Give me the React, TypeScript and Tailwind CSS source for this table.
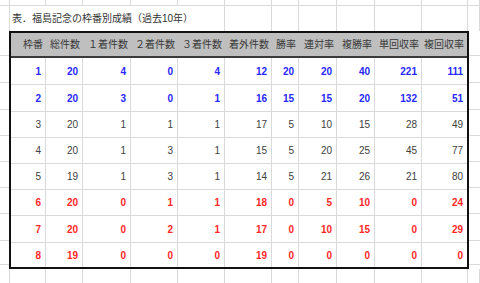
import React from "react";

const OUTER = [10, 36, 37, 48, 47, 47, 47, 27, 38, 38, 47, 46, 12];
const INNER = [35, 37, 48, 47, 47, 47, 27, 38, 38, 47, 45];
const HEAD = ["枠番", "総件数", "１着件数", "２着件数", "３着件数", "着外件数", "勝率", "連対率", "複勝率", "単回収率", "複回収率"];
const ROWS: { v: number[]; c: "b" | "n" | "r" }[] = [
  { v: [1, 20, 4, 0, 4, 12, 20, 20, 40, 221, 111], c: "b" },
  { v: [2, 20, 3, 0, 1, 16, 15, 15, 20, 132, 51], c: "b" },
  { v: [3, 20, 1, 1, 1, 17, 5, 10, 15, 28, 49], c: "n" },
  { v: [4, 20, 1, 3, 1, 15, 5, 20, 25, 45, 77], c: "n" },
  { v: [5, 19, 1, 3, 1, 14, 5, 21, 26, 21, 80], c: "n" },
  { v: [6, 20, 0, 1, 1, 18, 0, 5, 10, 0, 24], c: "r" },
  { v: [7, 20, 0, 2, 1, 17, 0, 10, 15, 0, 29], c: "r" },
  { v: [8, 19, 0, 0, 0, 19, 0, 0, 0, 0, 0], c: "r" },
];
const RH = [27, 27, 26, 26, 26, 26, 27, 24];
const SIDE_H = [25, 27, 27, 26, 26, 26, 26, 27, 24];

const font = { fontFamily: '"Liberation Sans", "Noto Sans CJK JP", sans-serif' };

export default function App() {
  return (
    <div className="w-[480px] h-[283px] bg-white overflow-hidden flex flex-col text-[#404040]" style={font}>
      {/* top strip */}
      <div className="flex h-[6px] border-b border-[#dadada] shrink-0">
        {OUTER.map((w, i) => (
          <div key={i} className="h-full border-r border-[#dadada]" style={{ width: w }} />
        ))}
      </div>
      {/* title row */}
      <div className="flex h-[25px] shrink-0">
        <div className="h-full w-[10px] border-r border-[#dadada]" />
        <div className="h-full w-[215px] border-r border-[#dadada] flex items-center pl-[2px] text-[10px] text-[#333] whitespace-nowrap">
          表．福島記念の枠番別成績（過去10年）
        </div>
        {OUTER.slice(6).map((w, i) => (
          <div key={i} className="h-full border-r border-[#dadada]" style={{ width: w }} />
        ))}
      </div>
      {/* table section */}
      <div className="flex shrink-0">
        <div className="w-[9px] flex flex-col">
          {SIDE_H.map((h, i) => (
            <div key={i} className="border-b border-[#dadada]" style={{ height: h }} />
          ))}
        </div>
        <div className="w-[460px] border-2 border-[#111] flex flex-col">
          <div className="flex h-[25px] bg-[#bfbfbf] border-b-2 border-[#3a3a3a]">
            {HEAD.map((t, i) => (
              <div
                key={i}
                className="h-full flex items-center justify-end pr-[3px] text-[10px] text-[#383838] whitespace-nowrap"
                style={{ width: INNER[i] }}
              >
                {t}
              </div>
            ))}
          </div>
          {ROWS.map((r, ri) => (
            <div
              key={ri}
              className={`flex ${ri < 7 ? "border-b border-[#dadada]" : ""}`}
              style={{ height: RH[ri] }}
            >
              {r.v.map((n, i) => (
                <div
                  key={i}
                  className={`h-full flex items-center justify-end pr-[4px] text-[10px] ${i < 10 ? "border-r border-[#dadada]" : ""} ${
                    r.c === "b" ? "font-bold text-[#2828ff]" : r.c === "r" ? "font-bold text-[#ff2828]" : "text-[#404040]"
                  }`}
                  style={{ width: INNER[i] }}
                >
                  {n}
                </div>
              ))}
            </div>
          ))}
        </div>
        <div className="w-[11px] flex flex-col">
          {SIDE_H.map((h, i) => (
            <div key={i} className="border-b border-[#dadada]" style={{ height: h }} />
          ))}
        </div>
      </div>
      {/* bottom strip */}
      <div className="flex flex-1">
        {OUTER.map((w, i) => (
          <div key={i} className="h-full border-r border-[#dadada]" style={{ width: w }} />
        ))}
      </div>
    </div>
  );
}
